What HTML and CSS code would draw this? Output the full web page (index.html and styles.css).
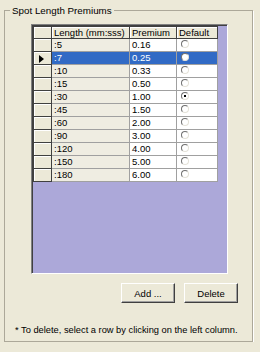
FILE: index.html
```html
<!DOCTYPE html>
<html lang="en">
<head>
    <meta charset="UTF-8">
    <meta name="viewport" content="width=device-width, initial-scale=1.0">
    <title>Spot Length Premiums</title>
    <link rel="stylesheet" href="styles.css">
</head>
<body>
    <fieldset class="group">
        <legend>Spot Length Premiums</legend>

        <div class="grid">
            <table class="premiums">
                <colgroup>
                    <col class="c-head">
                    <col class="c-len">
                    <col class="c-prem">
                    <col class="c-def">
                </colgroup>
                <thead>
                    <tr>
                        <th class="corner"></th>
                        <th>Length (mm:sss)</th>
                        <th>Premium</th>
                        <th>Default</th>
                    </tr>
                </thead>
                <tbody>
                    <tr><td class="rowhead"></td><td class="len">:5</td><td>0.16</td><td><span class="radio"></span></td></tr>
                    <tr class="selected"><td class="rowhead"><svg class="arrow" width="5" height="8" viewBox="0 0 5 8"><polygon points="0,0 5,4 0,8" fill="#000"/></svg></td><td class="len">:7</td><td>0.25</td><td><span class="radio"></span></td></tr>
                    <tr><td class="rowhead"></td><td class="len">:10</td><td>0.33</td><td><span class="radio"></span></td></tr>
                    <tr><td class="rowhead"></td><td class="len">:15</td><td>0.50</td><td><span class="radio"></span></td></tr>
                    <tr><td class="rowhead"></td><td class="len">:30</td><td>1.00</td><td><span class="radio checked"></span></td></tr>
                    <tr><td class="rowhead"></td><td class="len">:45</td><td>1.50</td><td><span class="radio"></span></td></tr>
                    <tr><td class="rowhead"></td><td class="len">:60</td><td>2.00</td><td><span class="radio"></span></td></tr>
                    <tr><td class="rowhead"></td><td class="len">:90</td><td>3.00</td><td><span class="radio"></span></td></tr>
                    <tr><td class="rowhead"></td><td class="len">:120</td><td>4.00</td><td><span class="radio"></span></td></tr>
                    <tr><td class="rowhead"></td><td class="len">:150</td><td>5.00</td><td><span class="radio"></span></td></tr>
                    <tr><td class="rowhead"></td><td class="len">:180</td><td>6.00</td><td><span class="radio"></span></td></tr>
                </tbody>
            </table>
        </div>

        <div class="actions">
            <button type="button" class="btn">Add ...</button>
            <button type="button" class="btn">Delete</button>
        </div>

        <p class="note">* To delete, select a row by clicking on the left column.</p>
    </fieldset>
</body>
</html>
```

FILE: styles.css
```css
body {
    margin: 0;
    padding: 5px 7px 0 4px;
    background-color: #ece9d8;
    font-family: "Liberation Sans", Arial, sans-serif;
    font-size: 9.5px;
    color: #000;
}

.group {
    margin: 0;
    padding: 8px 0 5px 0;
    min-width: 0;
    border: 1px solid #aca899;
    box-shadow: 1px 1px 0 #fff;
}

.group legend {
    margin-left: 5px;
    padding: 0 2px;
    line-height: 11px;
    font-size: 9.8px;
}

.grid {
    margin-left: 26px;
    width: 197px;
    height: 250px;
    box-sizing: border-box;
    padding: 1px 0 0 1px;
    background-color: #aca8d9;
    border: 1px solid;
    border-color: #808080 #fff #fff #808080;
    box-shadow: inset 1px 1px 0 #404040;
}

.premiums {
    border-collapse: collapse;
    table-layout: fixed;
    width: 184px;
}

.c-head { width: 18px; }
.c-len { width: 78px; }
.c-prem { width: 47px; }
.c-def { width: 41px; }

.premiums th,
.premiums td {
    padding: 0 2px;
    text-align: left;
    font-weight: normal;
    white-space: nowrap;
    overflow: hidden;
}

.premiums th {
    height: 11px;
    line-height: 11px;
    background-color: #ece9d8;
    border: 1px solid #404040;
    box-shadow: inset 1px 1px 0 #fff;
}

.premiums td {
    height: 12px;
    line-height: 12px;
    background-color: #fff;
    border: 1px solid #a0a0a0;
}

.premiums td.len {
    background-color: #efede2;
}

.premiums td.rowhead {
    padding: 0;
    background-color: #ece9d8;
    border: 1px solid #404040;
    box-shadow: inset 1px 1px 0 #fff;
    text-align: center;
}

.arrow {
    display: block;
    margin: 2px 0 0 5px;
}

.selected td:not(.rowhead) {
    background-color: #316ac5;
    color: #fff;
}

.radio {
    display: inline-block;
    vertical-align: middle;
    width: 6px;
    height: 6px;
    margin: -2px 0 0 2px;
    border: 1px solid;
    border-color: #707070 #e4e2d8 #e4e2d8 #707070;
    border-radius: 50%;
    background-color: #fff;
    position: relative;
}

.radio.checked::after {
    content: "";
    position: absolute;
    left: 2px;
    top: 2px;
    width: 2px;
    height: 2px;
    background-color: #000;
}

.actions {
    display: flex;
    justify-content: flex-end;
    gap: 9px;
    margin: 9px 14px 0 0;
}

.btn {
    width: 54px;
    height: 20px;
    padding: 0;
    font-family: inherit;
    font-size: 9.5px;
    color: #000;
    background-color: #ece9d8;
    border: 1px solid;
    border-color: #fff #404040 #404040 #fff;
    box-shadow: inset -1px -1px 0 #a0a0a0;
}

.note {
    margin: 22px 0 0 10px;
    line-height: 11px;
    font-size: 9.3px;
}
```
